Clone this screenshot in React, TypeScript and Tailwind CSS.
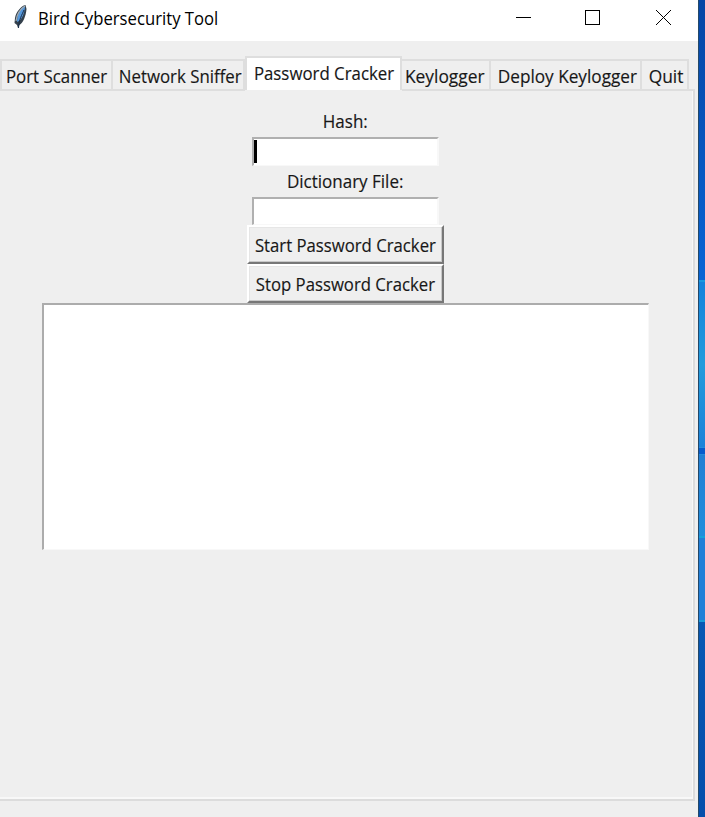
import React from "react";

function Label({ children, className = "" }: { children: React.ReactNode; className?: string }) {
  return (
    <span className={`block whitespace-nowrap text-[18px] leading-[24px] [-webkit-text-stroke:0.15px_#171717] ${className}`}>
      {children}
    </span>
  );
}

const tabs = [
  { name: "Port Scanner", width: "w-[113px]", scale: "scale-x-[0.937] translate-x-[0.5px]" },
  { name: "Network Sniffer", width: "w-[132px]", scale: "scale-x-[0.935] translate-x-[2.5px]" },
  { name: "Password Cracker", width: "w-[157px]", scale: "scale-x-[0.935] translate-x-[1px]", active: true },
  { name: "Keylogger", width: "w-[89px]", scale: "scale-x-[0.965] translate-x-[-0.5px]" },
  { name: "Deploy Keylogger", width: "w-[151px]", scale: "scale-x-[0.955] translate-x-[1.5px]" },
  { name: "Quit", width: "w-[47px]", scale: "scale-x-[0.965] translate-x-[1px]" },
];

function Feather() {
  return (
    <svg width="16" height="26" viewBox="0 0 16 26" className="ml-[13px]">
      <path d="M12.500 1C8 2 3 8 2 14L1.500 19L4 21L5 24L6.500 21C10 19 13 12 13.500 5Z" fill="#34404c" />
      <path d="M12 2C7 4 4 11 4 18L6 17C9 15 12 8 12 2Z" fill="#5598dc" />
      <path d="M12 2C7 5 4 10 3 17" stroke="#a2adb5" strokeWidth="1.200" fill="none" />
      <path d="M11 6C9 11 6 15 5.500 24" stroke="#172c49" strokeWidth="1" fill="none" />
    </svg>
  );
}

function Entry({ caret = false, className = "" }: { caret?: boolean; className?: string }) {
  return (
    <div className={`w-[187px] border-t-2 border-l-2 border-t-[#b0b0b0] border-l-[#b0b0b0] border-r-2 border-b border-r-[#f8f8f8] border-b-[#f8f8f8] bg-white ${className}`}>
      {caret && <div className="mt-[1px] h-[23px] w-[3px] bg-black" />}
    </div>
  );
}

function ClassicButton({ children }: { children: React.ReactNode }) {
  return (
    <button className="flex h-[39px] w-[197px] shrink-0 items-center justify-center border-2 border-t-white border-l-white border-r-[#777] border-b-[#777] bg-[#efefef] shadow-[inset_-1px_-1px_#c8c8c8,inset_1px_1px_#e6e6e6]">
      <Label className="scale-x-[0.929]">{children}</Label>
    </button>
  );
}

export default function App() {
  return (
    <div className="flex h-[817px] w-[705px] overflow-hidden bg-[#efefef] font-['Open_Sans','Noto_Sans',sans-serif] text-[#171717]">
      <main className="flex w-[698px] flex-col">
        <header className="flex h-[41px] shrink-0 items-start bg-white text-black">
          <div className="mt-[4px]"><Feather /></div>
          <div className="ml-[9px] mt-[6px] w-[180px] text-[18px] leading-[24px] whitespace-nowrap">
            <span className="inline-block origin-left scale-x-[0.927]">Bird Cybersecurity Tool</span>
          </div>
          <svg width="157" height="16" viewBox="0 0 157 16" fill="none" stroke="black" className="ml-[298px] mt-[10px]" shapeRendering="crispEdges">
            <path d="M0 7.500H15M69.500 .5H83.500V14.500H69.500Z" />
            <path d="M140 0L155 15M155 0L140 15" shapeRendering="auto" />
          </svg>
        </header>
        <nav className="mt-[15px] flex h-[34px] shrink-0 items-end">
          {tabs.map((tab, i) => (
            <div
              key={tab.name}
              className={`${tab.width} flex shrink-0 justify-center border-t-2 border-r-2 border-[#dedede] ${i === 0 || tab.active ? "border-l-2" : ""} ${tab.active ? "h-[34px] bg-white" : "h-[31px]"} pt-[3px]`}
            >
              <Label className={tab.scale}>{tab.name}</Label>
            </div>
          ))}
        </nav>
        <section className="relative flex h-[711px] w-[695px] shrink-0 flex-col items-center border-r-2 border-b-2 border-[#dcdcdc] bg-[#efefef] pr-[2px] shadow-[inset_-1px_-2px_#f8f8f8]">
          <div className="absolute top-[-1px] left-0 h-[2px] w-[245px] bg-[#dedede]" />
          <div className="absolute top-[-1px] right-[-2px] h-[2px] w-[293px] bg-[#dedede]" />
          <Label className="mt-[19px] scale-x-[0.945] translate-x-[-0.5px]">Hash:</Label>
          <Entry caret className="mt-[4px] h-[29px]" />
          <Label className="mt-[3px] scale-x-[0.945] translate-x-[-0.5px]">Dictionary File:</Label>
          <Entry className="mt-[4px] h-[28px]" />
          <ClassicButton>Start Password Cracker</ClassicButton>
          <ClassicButton>Stop Password Cracker</ClassicButton>
          <div className="h-[247px] w-[607px] border-t-2 border-l-2 border-r border-b border-t-[#acacac] border-l-[#acacac] border-r-[#f8f8f8] border-b-[#f8f8f8] bg-white" />
        </section>
      </main>
      <aside className="flex w-[7px] flex-col border-l border-[#244969]">
        <div className="h-[280px] bg-linear-to-b from-[#0646a5] to-[#0864d5]" />
        <div className="h-[2px] bg-[#1799df]" />
        <div className="h-[165px] bg-linear-to-b from-[#1482dc] via-[#239bdc] to-[#1c82d9]" />
        <div className="h-[8px] border-t border-b border-[#258bdb] bg-[#075bcc]" />
        <div className="h-[81px] bg-linear-to-b from-[#227fd4] to-[#208edc]" />
        <div className="h-[2px] bg-[#15a1da]" />
        <div className="h-[82px] bg-[#217fd8]" />
        <div className="h-[2px] bg-[#159bd9]" />
        <div className="grow bg-linear-to-b from-[#0758b4] to-[#054eab]" />
      </aside>
    </div>
  );
}
